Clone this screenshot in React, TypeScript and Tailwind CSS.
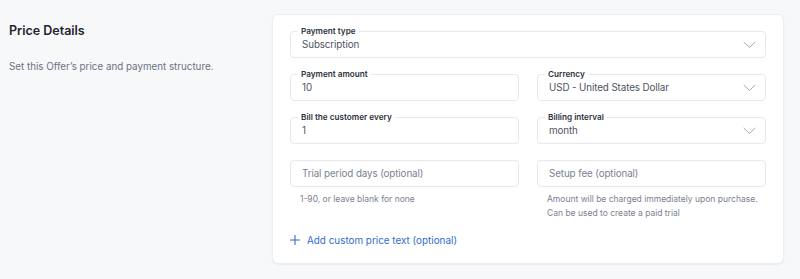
import React from 'react';

// ============================================================================
// PRICE DETAILS
// Offer pricing form with floating-label fields
// ============================================================================

function Chevron() {
  return (
    <svg width="13" height="8" viewBox="0 0 13 8" fill="none" className="shrink-0">
      <path d="M1 1.2 L6.5 6.5 L12 1.2" stroke="#a3a8b2" strokeWidth="1" strokeLinecap="round" strokeLinejoin="round" />
    </svg>
  );
}

interface FieldProps {
  label?: string;
  value?: string;
  placeholder?: string;
  select?: boolean;
}

function Field({ label, value, placeholder, select }: FieldProps) {
  return (
    <div className="relative h-[27px] rounded-[4px] border border-[#e6e8eb] bg-white flex items-center pl-[11px] pr-[9px]">
      {label && (
        <span className="absolute left-[7px] top-[-7px] bg-white px-[3px] text-[8.2px] leading-[12px] font-semibold text-[#2d3340]">
          {label}
        </span>
      )}
      <span
        className={`flex-1 text-[9.8px] tracking-[-0.01em] leading-[14px] mt-[1px] ${
          value ? 'text-[#4d5361]' : 'text-[#7b8190]'
        }`}
      >
        {value || placeholder}
      </span>
      {select && <Chevron />}
    </div>
  );
}

export default function App() {
  return (
    <div
      className="w-[800px] h-[279px] bg-[#f7f8fa] flex pt-[14px]"
      style={{ fontFamily: 'Inter, "Noto Sans", sans-serif' }}
    >
      {/* Section intro */}
      <div className="w-[272px] shrink-0 pl-[9px] pt-[9px]">
        <h2 className="text-[12.5px] leading-[16px] font-semibold text-[#1f2430]">Price Details</h2>
        <p className="mt-[21px] text-[9.8px] leading-[14px] text-[#6b7180]">
          Set this Offer’s price and payment structure.
        </p>
      </div>

      {/* Form card */}
      <div className="w-[512px] h-[250px] rounded-[6px] bg-white border border-[#eceef1] shadow-[0_1px_2px_rgba(0,0,0,0.06)] px-[17px] pt-[16px]">
        <div className="grid grid-cols-2 gap-x-[18px] gap-y-[16px]">
          <div className="col-span-2">
            <Field label="Payment type" value="Subscription" select />
          </div>
          <Field label="Payment amount" value="10" />
          <Field label="Currency" value="USD - United States Dollar" select />
          <Field label="Bill the customer every" value="1" />
          <Field label="Billing interval" value="month" select />
          <div>
            <Field placeholder="Trial period days (optional)" />
            <p className="mt-[5px] pl-[10px] text-[8.5px] leading-[14px] text-[#7b8190]">
              1-90, or leave blank for none
            </p>
          </div>
          <div>
            <Field placeholder="Setup fee (optional)" />
            <p className="mt-[5px] pl-[10px] text-[8.5px] leading-[14px] text-[#7b8190]">
              Amount will be charged immediately upon purchase.
              <br />
              Can be used to create a paid trial
            </p>
          </div>
        </div>

        <button className="mt-[13px] flex items-center gap-[7px] text-[9.9px] leading-[14px] text-[#2f6bd0]">
          <svg width="10" height="10" viewBox="0 0 10 10" fill="none">
            <path d="M5 0.5 V9.5 M0.5 5 H9.5" stroke="#2f6bd0" strokeWidth="1.1" strokeLinecap="round" />
          </svg>
          Add custom price text (optional)
        </button>
      </div>
    </div>
  );
}
